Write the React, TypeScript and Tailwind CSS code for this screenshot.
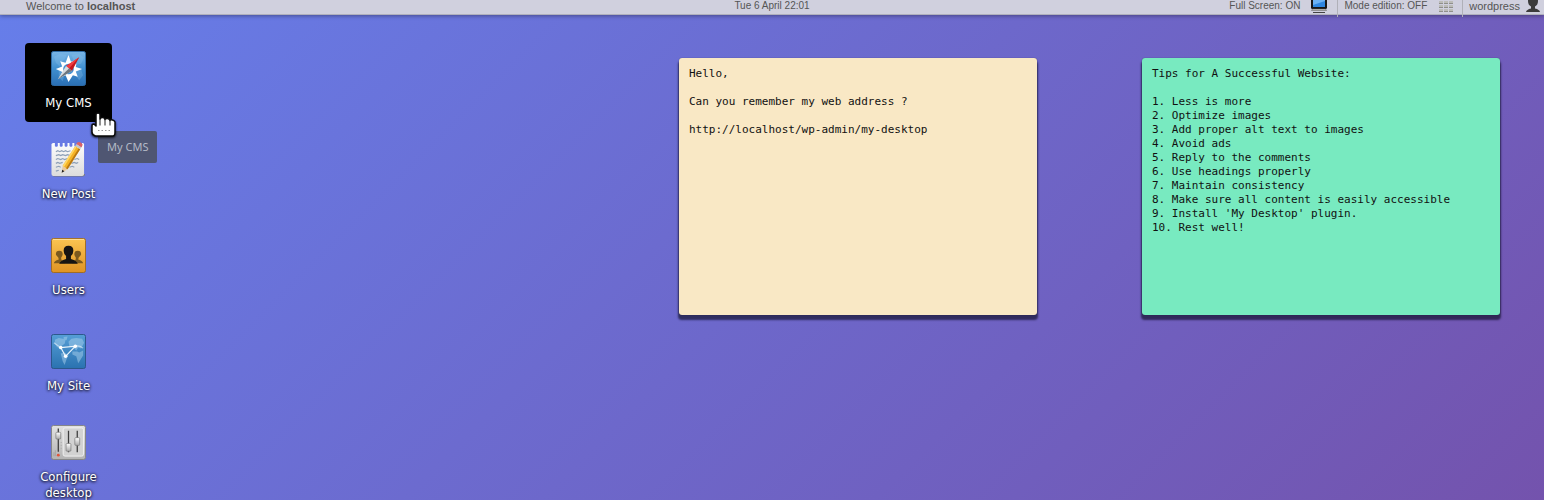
import type { ReactNode } from "react";

type Shortcut = {
  label: string;
  icon: ReactNode;
  className: string;
  active?: boolean;
};

function CompassIcon() {
  return (
    <svg width="35" height="35" viewBox="0 0 36 36" aria-hidden="true">
      <defs>
        <linearGradient id="compassSky" x1="0" y1="0" x2="0" y2="1">
          <stop offset="0" stopColor="#7ab6e6" />
          <stop offset="0.5" stopColor="#3f8fd0" />
          <stop offset="1" stopColor="#2a6fb4" />
        </linearGradient>
      </defs>
      <rect x="0.500" y="0.500" width="35" height="35" rx="2" fill="url(#compassSky)" stroke="#2d6ba6" />
      <path d="M3 6l6-3 7 1-2 5-4 2-1 5-4-4zM21 4l8-1 5 4-3 6-5 1-3-5zM24 20l7-1 2 6-4 5-3-4zM8 20l6 4-2 7-4-4z" fill="#8fc3ea" opacity="0.3" />
      <path
        d="M18 4l2.500 7 4.500-1.500 1 4.500-.5 2.500 6.500 2-6.500 2.500 2 5.500-5-1.500-4.500 7-3-7-5.500 2 2-5.500L5 18.500l6.500-2.500-2-5.500 5.500 1.500z"
        fill="#fff"
      />
      <circle cx="18" cy="18.500" r="5.500" fill="#4793d3" />
      <path d="M29 6.500L21.500 20.500 15.500 15.500z" fill="#c4161d" />
      <path d="M29 6.500L18.500 18 15.500 15.500z" fill="#ee3d42" />
      <path d="M7 29L21.500 20.500 15.500 15.500z" fill="#d9dde0" />
      <path d="M7 29L21.500 20.500 18.500 18z" fill="#6f777e" />
    </svg>
  );
}

function NotepadIcon() {
  return (
    <svg width="35" height="35" viewBox="0 0 36 36" aria-hidden="true">
      <defs>
        <linearGradient id="padPaper" x1="0" y1="0" x2="0" y2="1">
          <stop offset="0" stopColor="#fdfdfd" />
          <stop offset="1" stopColor="#dcdcdc" />
        </linearGradient>
      </defs>
      <path d="M1 33q0 2.500 2 2.500h30q2 0 2-2.500z" fill="#777" />
      <path
        d="M2 1h2v3q1.500 2 3 0V1h2v3q1.500 2 3 0V1h2v3q1.500 2 3 0V1h2v3q1.500 2 3 0V1h2v3q1.500 2 3 0V1h2v3q1 2 3 0V1h1l1 1v31q0 2-2 2H2.500q-2 0-2-2V2z"
        fill="url(#padPaper)"
      />
      <g fill="none" stroke="#8d9fb6" strokeWidth="1.200">
        <path d="M5 10l2-1 2 1 2-1 2 1 2-1 2 1 3-1" />
        <path d="M5 14l3-1 2 1 2-1 3 1 2-1 3 1" />
        <path d="M5 18l2-1 3 1 2-1 2 1 3-1M24 18l3-1 2 1" />
        <path d="M5 22l2-1 2 1 3-1M21 22l3-1 2 1 2-1" />
        <path d="M5 26l3-1 2 1M19 26l3-1 2 1" />
        <path d="M5 30l3-1" />
      </g>
      <path d="M11 31.500l1-7 5 3.500z" fill="#e9c99a" />
      <path d="M11 31.500l.5-3 2.300 1.500z" fill="#222" />
      <path d="M12 24.500L25 4l5 3.500L17 28z" fill="#f5b325" />
      <path d="M12 24.500L25 4l1.500 1L13.500 25.500z" fill="#ffd866" />
      <path d="M15.500 27L28.500 6.500l1.500 1L17 28z" fill="#b87813" />
      <path d="M25 4l1-2 5.500 3.500-1.500 2z" fill="#c4c8cc" />
      <path d="M26 2l1-1.500q3-1.500 5.500 2L31.500 5.500z" fill="#dc6265" />
    </svg>
  );
}

function UsersIcon() {
  return (
    <svg width="35" height="35" viewBox="0 0 36 36" aria-hidden="true">
      <defs>
        <linearGradient id="usersGold" x1="0" y1="0" x2="0" y2="1">
          <stop offset="0" stopColor="#fbc552" />
          <stop offset="1" stopColor="#e09423" />
        </linearGradient>
      </defs>
      <rect x="0.500" y="0.500" width="35" height="35" rx="2" fill="url(#usersGold)" stroke="#a06c22" />
      <path d="M2 1.500h32" stroke="#ffe09a" />
      <path
        d="M3 26q0-2.500 5-4l-.5-2Q5 18 5 16.500 5 13 8.500 13t3.500 3.500q0 2-1.500 3.500v2q3 1 4 4z"
        fill="#7c5a1e"
      />
      <path
        d="M33 26q0-2.500-5-4l.5-2q2.500-2 2.500-3.500 0-3.500-3.500-3.500T24 16.500q0 2 1.500 3.500v2q-3 1-4 4z"
        fill="#7c5a1e"
      />
      <path
        d="M8.500 26.500q.5-3 7-5v-3Q13 16 13 13q0-5 5-5t5 5q0 3-2.500 5.500v3q6.500 2 7 5z"
        fill="#171512"
      />
    </svg>
  );
}

function WorldIcon() {
  return (
    <svg width="35" height="35" viewBox="0 0 36 36" aria-hidden="true">
      <defs>
        <linearGradient id="worldSea" x1="0" y1="0" x2="0" y2="1">
          <stop offset="0" stopColor="#559ed6" />
          <stop offset="1" stopColor="#2a72b0" />
        </linearGradient>
      </defs>
      <rect x="0.500" y="0.500" width="35" height="35" rx="2" fill="url(#worldSea)" stroke="#2b5688" />
      <g fill="#a9d0ec" opacity="0.5">
        <path d="M4 6l4-2 4 1 3 1-1 4-3 2-1 4-4-3-2-3zM13 3l4-.5-1 4-3-1z" />
        <path d="M10 20l4-1 4 3-2 4-2 6-2-4-1-4z" />
        <path d="M18 8l3-3 5-1 6 1 2 4-3 6-3-1-2 3-3-3-4-1z" />
        <path d="M22 18l5 0 2 1 4-2v5l-3 5-2 3-2-7-4-2z" />
      </g>
      <g fill="none" stroke="#e8f4fc" strokeWidth="1.200">
        <path d="M10 14L25 12.500 15 23z" />
        <path d="M25 12.500q4-1 8 2M10 14L3 9" opacity="0.6" />
      </g>
      <circle cx="10" cy="14" r="1.800" fill="#fff" />
      <circle cx="25" cy="12.500" r="1.800" fill="#fff" />
      <circle cx="15" cy="23" r="1.800" fill="#fff" />
    </svg>
  );
}

function SlidersIcon() {
  return (
    <svg width="35" height="35" viewBox="0 0 36 36" aria-hidden="true">
      <defs>
        <linearGradient id="mixerBody" x1="0" y1="0" x2="0" y2="1">
          <stop offset="0" stopColor="#e2e2e2" />
          <stop offset="1" stopColor="#b3b3b3" />
        </linearGradient>
        <linearGradient id="mixerKnob" x1="0" y1="0" x2="0" y2="1">
          <stop offset="0" stopColor="#ffffff" />
          <stop offset="1" stopColor="#a9a9a9" />
        </linearGradient>
      </defs>
      <rect x="0.500" y="0.500" width="35" height="35" rx="2" fill="url(#mixerBody)" stroke="#858585" />
      <rect x="12.500" y="3" width="21" height="29" rx="2" fill="#d2d2d2" stroke="#f1f1f1" />
      <g stroke="#3c3c3c" strokeWidth="1.300">
        <path d="M7.500 3.500v24M18 6v22M27 6v22" />
      </g>
      <g stroke="#969696" strokeWidth="0.600">
        <path d="M3 28v4M4.500 26v6M10 18h1M10 21h1M10 24h1" />
      </g>
      <g fill="url(#mixerKnob)" stroke="#777" strokeWidth="0.700">
        <rect x="5" y="7.500" width="5" height="7" rx="1" />
        <rect x="15.500" y="19" width="5" height="8" rx="1" />
        <rect x="24.500" y="13" width="5" height="8" rx="1" />
      </g>
      <circle cx="7.500" cy="31" r="1.500" fill="#e2563a" />
    </svg>
  );
}

function ScreenIcon() {
  return (
    <svg width="18" height="18" viewBox="0 0 18 18" aria-hidden="true">
      <rect x="1" y="0" width="16" height="14" rx="1.500" fill="#171717" />
      <rect x="3" y="1" width="12" height="11" fill="#2e86e0" />
      <path d="M3 1h12v5L3 10z" fill="#6bb2f5" />
      <path d="M2.500 14h13l1 1.500h-15z" fill="#c9c9c4" stroke="#555" strokeWidth="0.500" />
      <path d="M3 17.500h12" stroke="#444" />
    </svg>
  );
}

function GridIcon() {
  return (
    <svg width="14" height="18" viewBox="0 0 14 18" fill="#bcbcb8" aria-hidden="true">
      <path d="M0 2h4v3H0zM5 2h4v3H5zM10 2h4v3h-4zM0 6h4v3H0zM5 6h4v3H5zM10 6h4v3h-4zM0 10h4v3H0zM5 10h4v3H5zM10 10h4v3h-4zM0 14h4v3H0zM5 14h4v3H5zM10 14h4v3h-4z" />
      <path
        d="M0 8h4v1H0zM5 8h4v1H5zM10 8h4v1h-4zM0 12h4v1H0zM5 12h4v1H5zM10 12h4v1h-4zM0 16h4v1H0zM5 16h4v1H5zM10 16h4v1h-4z"
        fill="#8f8f8b"
      />
    </svg>
  );
}

function PersonIcon() {
  return (
    <svg width="14" height="18" viewBox="0 0 14 18" aria-hidden="true">
      <path
        d="M0 17q.5-2.500 5-3.500v-2Q2 10 2 6q0-5 5-5t5 5q0 4-3 5.500v2q4.500 1 5 3.500z"
        fill="#3b3b3b"
      />
    </svg>
  );
}

function HandCursor() {
  return (
    <svg
      className="pointer-events-none absolute left-[65px] top-[69px] z-20 drop-shadow-[0_1px_1px_rgba(0,0,0,0.8)]"
      width="28"
      height="27"
      viewBox="0 0 28 27"
      aria-hidden="true"
    >
      <path
        d="M6 2.500Q6 1 8 1t2 1.500V7q.5-1.500 2.500-1.500T15 7.500q.5-1.200 2.500-1T20 8.500q.500-1 2.500-.5t2.500 2V20q0 4-2 4H5.500Q2 23 2 20v-6.500Q2 12 4 12l2 2z"
        fill="#fff"
        stroke="#0a0a0a"
        strokeWidth="1.500"
        strokeLinejoin="round"
      />
      <path d="M10 7v6.500M15 8v5.500M20 9v4.500" stroke="#333" strokeWidth="1.100" />
      <path d="M8 18.500h1.500M11.500 18.500H13M15 18.500h1.500M18.500 18.500H20" stroke="#999" />
    </svg>
  );
}

const shortcuts: Shortcut[] = [
  { label: "My CMS", icon: <CompassIcon />, className: "", active: true },
  { label: "New Post", icon: <NotepadIcon />, className: "mt-3" },
  { label: "Users", icon: <UsersIcon />, className: "mt-[17px]" },
  { label: "My Site", icon: <WorldIcon />, className: "mt-[17px]" },
  { label: "Configure desktop", icon: <SlidersIcon />, className: "mt-3" },
];

const helloNote = `Hello,

Can you remember my web address ?

http://localhost/wp-admin/my-desktop`;

const tipsNote = `Tips for A Successful Website:

1. Less is more
2. Optimize images
3. Add proper alt text to images
4. Avoid ads
5. Reply to the comments
6. Use headings properly
7. Maintain consistency
8. Make sure all content is easily accessible
9. Install 'My Desktop' plugin.
10. Rest well!`;

function Note({ name, text, color }: { name: string; text: string; color: string }) {
  return (
    <textarea
      aria-label={name}
      defaultValue={text}
      spellCheck={false}
      className={`h-[257px] w-[358px] resize-none overflow-hidden rounded-[3px] px-[10px] py-[9px] font-['DejaVu_Sans_Mono',monospace] text-[11px] leading-[14px] text-[#111] outline-none shadow-[0_4px_2px_1px_rgba(10,10,30,0.62),0_0_1px_rgba(10,10,25,0.6)] ${color}`}
    />
  );
}

function TopBar() {
  return (
    <header className="relative z-10 grid h-[15px] grid-cols-[1fr_auto_1fr] items-start border-b border-[#b0b0bc] bg-[#d0d0de] font-['Liberation_Sans',Arial,sans-serif] text-[10px] leading-3 text-[#555] shadow-[0_1px_4px_rgba(0,0,0,0.35)]">
      <p className="pl-[26px] text-[11px]">
        Welcome to <strong>localhost</strong>
      </p>
      <time>Tue 6 April 22:01</time>
      <div className="flex h-[17px] items-start justify-end pr-1">
        <button className="flex h-full items-start gap-[10px] border-r border-[#b0b0b8] pr-[9px]">
          Full Screen: ON
          <span className="-mt-[5px]">
            <ScreenIcon />
          </span>
        </button>
        <button className="flex h-full items-start gap-3 border-r border-[#b0b0b8] pl-[6px] pr-[9px]">
          Mode edition: OFF
          <span className="-mt-[5px]">
            <GridIcon />
          </span>
        </button>
        <a href="#profile" className="flex items-start gap-[6px] pl-[6px] text-[11px]">
          wordpress
          <span className="-mt-[5px]">
            <PersonIcon />
          </span>
        </a>
      </div>
    </header>
  );
}

export default function App() {
  return (
    <div className="h-screen overflow-hidden bg-[linear-gradient(135deg,#667eea_0%,#764ba2_118%)]">
      <TopBar />

      <main className="flex items-start justify-between pl-[25px] pr-11 pt-7">
        <nav className="relative flex w-[87px] flex-col">
          {shortcuts.map((item) => (
            <a
              key={item.label}
              href="#desktop"
              className={`flex min-h-[79px] flex-col items-center gap-[9px] rounded pt-2 text-center font-['DejaVu_Sans_Condensed','DejaVu_Sans',sans-serif] text-[13px] leading-4 text-white [text-shadow:0_1px_3px_#000,0_0_3px_rgba(0,0,0,0.7)] ${item.className} ${
                item.active ? "bg-black" : ""
              }`}
            >
              {item.icon}
              <span className="px-2">{item.label}</span>
            </a>
          ))}
          <HandCursor />
          <div
            role="tooltip"
            className="absolute left-[73px] top-[88px] z-10 whitespace-nowrap rounded-[2px] bg-[#4f5672] px-[9px] py-[6px] font-['Noto_Sans',sans-serif] text-[11px] leading-5 text-[#b4bac6]"
          >
            My CMS
          </div>
        </nav>

        <section className="flex gap-[105px] pt-[15px]">
          <Note name="Web address note" text={helloNote} color="bg-[#f9e8c5]" />
          <Note name="Website tips note" text={tipsNote} color="bg-[#78eac0]" />
        </section>
      </main>
    </div>
  );
}
